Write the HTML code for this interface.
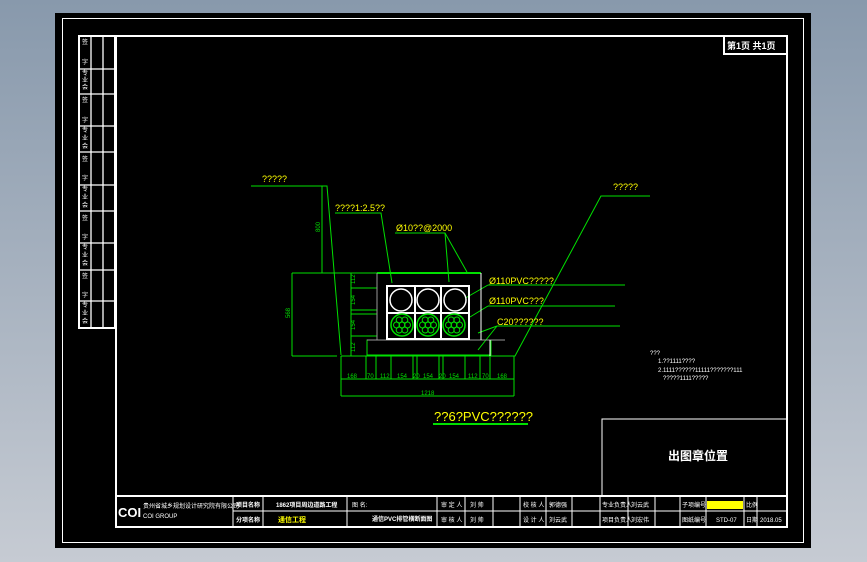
<!DOCTYPE html>
<html><head><meta charset="utf-8"><style>
html,body{margin:0;padding:0;width:867px;height:562px;overflow:hidden;background:linear-gradient(#8899ac,#c6cbd3);}
svg{position:absolute;left:0;top:0}
text{font-family:"Liberation Sans","Noto Sans CJK SC",sans-serif;}
</style></head><body>
<svg width="867" height="562" viewBox="0 0 867 562">
<defs>
<g id="hex" stroke="#00e000" stroke-width="1" fill="none">
<circle r="11" stroke-width="1.5"/>
<circle cx="0" cy="0" r="3"/><circle cx="-5.5" cy="0" r="3"/><circle cx="5.5" cy="0" r="3"/>
<circle cx="-2.8" cy="-5" r="3"/><circle cx="2.8" cy="-5" r="3"/>
<circle cx="-2.8" cy="5" r="3"/><circle cx="2.8" cy="5" r="3"/>
</g>
</defs>
<rect x="55" y="13" width="756" height="535" fill="#000"/>
<rect x="62.5" y="18.5" width="741" height="524" fill="none" stroke="#fff" stroke-width="1"/>
<rect x="116" y="36" width="671" height="491" fill="none" stroke="#fff" stroke-width="2"/>
<rect x="724" y="36" width="63" height="18" fill="none" stroke="#fff" stroke-width="2"/>
<text x="727" y="49" font-size="9" fill="#fff" font-weight="bold">第1页 共1页</text>
<g stroke="#fff" stroke-width="1.3" fill="none">
<rect x="79" y="36" width="36" height="292" stroke-width="2"/>
<line x1="91" y1="36" x2="91" y2="328"/><line x1="103" y1="36" x2="103" y2="328"/>
<line x1="79" y1="69" x2="115" y2="69"/><line x1="79" y1="94" x2="115" y2="94"/>
<line x1="79" y1="126" x2="115" y2="126"/><line x1="79" y1="152" x2="115" y2="152"/>
<line x1="79" y1="185" x2="115" y2="185"/><line x1="79" y1="211" x2="115" y2="211"/>
<line x1="79" y1="243" x2="115" y2="243"/><line x1="79" y1="270" x2="115" y2="270"/>
<line x1="79" y1="301" x2="115" y2="301"/>
</g>
<g fill="#fff" font-size="6">
<text x="82" y="44">签</text><text x="82" y="64">字</text><text x="82" y="75">专</text><text x="82" y="82">业</text><text x="82" y="89">会</text>
<text x="82" y="102">签</text><text x="82" y="122">字</text><text x="82" y="132">专</text><text x="82" y="140">业</text><text x="82" y="148">会</text>
<text x="82" y="161">签</text><text x="82" y="180">字</text><text x="82" y="191">专</text><text x="82" y="199">业</text><text x="82" y="207">会</text>
<text x="82" y="220">签</text><text x="82" y="239">字</text><text x="82" y="249">专</text><text x="82" y="257">业</text><text x="82" y="265">会</text>
<text x="82" y="278">签</text><text x="82" y="297">字</text><text x="82" y="307">专</text><text x="82" y="315">业</text><text x="82" y="323">会</text>
</g>
<g stroke="#00e000" stroke-width="1" fill="none">
<polyline points="251,186 327,186 341,355"/>
<line x1="322" y1="186" x2="322" y2="273"/>
<line x1="292" y1="273" x2="377" y2="273"/><line x1="292" y1="356" x2="337" y2="356"/>
<line x1="292" y1="273" x2="292" y2="356"/>
<line x1="351" y1="273" x2="351" y2="356"/>
<line x1="351" y1="288" x2="377" y2="288"/><line x1="351" y1="310" x2="377" y2="310"/>
<line x1="351" y1="314" x2="377" y2="314"/><line x1="351" y1="336" x2="377" y2="336"/>
<line x1="377" y1="273" x2="481" y2="273" stroke-width="2"/>
<rect x="367" y="340" width="124" height="15"/>
<polyline points="341,356 515,356 601,196 650,196"/>
<line x1="341" y1="356" x2="341" y2="396"/><line x1="514" y1="356" x2="514" y2="396"/>
<line x1="341" y1="379" x2="514" y2="379"/><line x1="341" y1="396" x2="514" y2="396"/>
<line x1="366" y1="356" x2="366" y2="379"/><line x1="376" y1="356" x2="376" y2="379"/>
<line x1="391" y1="356" x2="391" y2="379"/><line x1="413" y1="356" x2="413" y2="379"/>
<line x1="417" y1="356" x2="417" y2="379"/><line x1="439" y1="356" x2="439" y2="379"/>
<line x1="443" y1="356" x2="443" y2="379"/><line x1="465" y1="356" x2="465" y2="379"/>
<line x1="480" y1="356" x2="480" y2="379"/><line x1="490" y1="356" x2="490" y2="379"/>
<polyline points="335,213 381,213 392,283"/>
<polyline points="395,233 445,233 467,272"/><line x1="445" y1="233" x2="449" y2="282"/>
<line x1="488" y1="285" x2="625" y2="285"/><line x1="488" y1="285" x2="462" y2="300"/>
<line x1="488" y1="306" x2="615" y2="306"/><line x1="488" y1="306" x2="470" y2="317"/>
<line x1="497" y1="326" x2="620" y2="326"/><line x1="497" y1="326" x2="478" y2="333"/><line x1="497" y1="326" x2="478" y2="350"/>
<line x1="433" y1="424" x2="528" y2="424" stroke-width="2"/>
</g>
<line x1="377" y1="273" x2="377" y2="340" stroke="#999"/>
<line x1="367" y1="340" x2="505" y2="340" stroke="#999"/>
<line x1="481" y1="273" x2="481" y2="340" stroke="#fff"/>
<line x1="490" y1="340" x2="490" y2="356" stroke="#fff"/>
<g stroke="#fff" stroke-width="2" fill="none">
<rect x="387" y="286" width="82" height="53"/>
<line x1="415" y1="286" x2="415" y2="339"/><line x1="441" y1="286" x2="441" y2="339"/>
<line x1="387" y1="313" x2="469" y2="313"/>
</g>
<g stroke="#fff" stroke-width="1.5" fill="#000">
<circle cx="401" cy="300" r="11"/><circle cx="428" cy="300" r="11"/><circle cx="455" cy="300" r="11"/>
</g>
<use href="#hex" x="402" y="325"/><use href="#hex" x="428" y="325"/><use href="#hex" x="454" y="325"/>
<g fill="#ffff00" font-size="9">
<text x="262" y="182">?????</text><text x="335" y="211">????1:2.5??</text>
<text x="396" y="231">Ø10??@2000</text><text x="613" y="190">?????</text>
<text x="489" y="284">Ø110PVC?????</text><text x="489" y="304">Ø110PVC???</text>
<text x="497" y="325">C20??????</text>
<text x="434" y="421" font-size="13">??6?PVC??????</text>
</g>
<g fill="#00e000" font-size="6">
<text x="347" y="378">168</text><text x="367" y="378">70</text><text x="380" y="378">112</text>
<text x="397" y="378">154</text><text x="413" y="378">20</text><text x="423" y="378">154</text>
<text x="439" y="378">20</text><text x="449" y="378">154</text><text x="468" y="378">112</text>
<text x="482" y="378">70</text><text x="497" y="378">168</text><text x="421" y="395">1218</text>
<text x="290" y="318" transform="rotate(-90 290 318)">568</text>
<text x="320" y="232" transform="rotate(-90 320 232)">800</text>
<text x="355" y="284" transform="rotate(-90 355 284)">112</text>
<text x="355" y="305" transform="rotate(-90 355 305)">154</text>
<text x="355" y="330" transform="rotate(-90 355 330)">154</text>
<text x="355" y="352" transform="rotate(-90 355 352)">112</text>
</g>
<g fill="#fff" font-size="6">
<text x="650" y="355">???</text><text x="658" y="363">1.??1111????</text>
<text x="658" y="372">2.1111??????11111???????111</text><text x="663" y="380">?????1111?????</text>
</g>
<rect x="602" y="419" width="185" height="77" fill="none" stroke="#fff"/>
<text x="668" y="460" font-size="12" font-weight="bold" fill="#fff">出图章位置</text>
<g stroke="#fff" stroke-width="1" fill="none">
<line x1="116" y1="496" x2="787" y2="496" stroke-width="2"/>
<line x1="233" y1="511" x2="787" y2="511"/>
<line x1="233" y1="496" x2="233" y2="527"/><line x1="263" y1="496" x2="263" y2="527"/>
<line x1="347" y1="496" x2="347" y2="527"/><line x1="437" y1="496" x2="437" y2="527"/>
<line x1="465" y1="496" x2="465" y2="527"/><line x1="493" y1="496" x2="493" y2="527"/>
<line x1="520" y1="496" x2="520" y2="527"/><line x1="546" y1="496" x2="546" y2="527"/>
<line x1="572" y1="496" x2="572" y2="527"/><line x1="600" y1="496" x2="600" y2="527"/>
<line x1="628" y1="496" x2="628" y2="527"/><line x1="655" y1="496" x2="655" y2="527"/>
<line x1="680" y1="496" x2="680" y2="527"/><line x1="706" y1="496" x2="706" y2="527"/>
<line x1="744" y1="496" x2="744" y2="527"/><line x1="757" y1="496" x2="757" y2="527"/>
</g>
<text x="118" y="517" font-size="13" font-weight="bold" fill="#fff">COI</text>
<g fill="#fff" font-size="6">
<text x="143" y="508">贵州省城乡规划设计研究院有限公司</text><text x="143" y="518">COI GROUP</text>
<text x="236" y="507" font-weight="bold">项目名称</text><text x="236" y="522" font-weight="bold">分项名称</text>
<text x="276" y="507" font-weight="bold">1862项目周边道路工程</text>
<text x="352" y="507">图 名:</text><text x="372" y="521" font-weight="bold">通信PVC排管横断面图</text>
<text x="441" y="507">审 定 人</text><text x="441" y="522">审 核 人</text>
<text x="470" y="507">刘 帅</text><text x="470" y="522">刘 帅</text>
<text x="523" y="507">校 核 人</text><text x="523" y="522">设 计 人</text>
<text x="549" y="507">郭德强</text><text x="549" y="522">刘云武</text>
<text x="602" y="507">专业负责人</text><text x="602" y="522">项目负责人</text>
<text x="631" y="507">刘云武</text><text x="631" y="522">刘宏伟</text>
<text x="682" y="507">子项编号</text><text x="682" y="522">图纸编号</text>
<text x="716" y="522">STD-07</text>
<text x="746" y="507">比例</text><text x="746" y="522">日期</text><text x="760" y="522">2018.05</text>
</g>
<rect x="707" y="501" width="36" height="8" fill="#ffff00"/>
<text x="278" y="522" font-size="7" font-weight="bold" fill="#ffff00">通信工程</text>
</svg>
</body></html>
